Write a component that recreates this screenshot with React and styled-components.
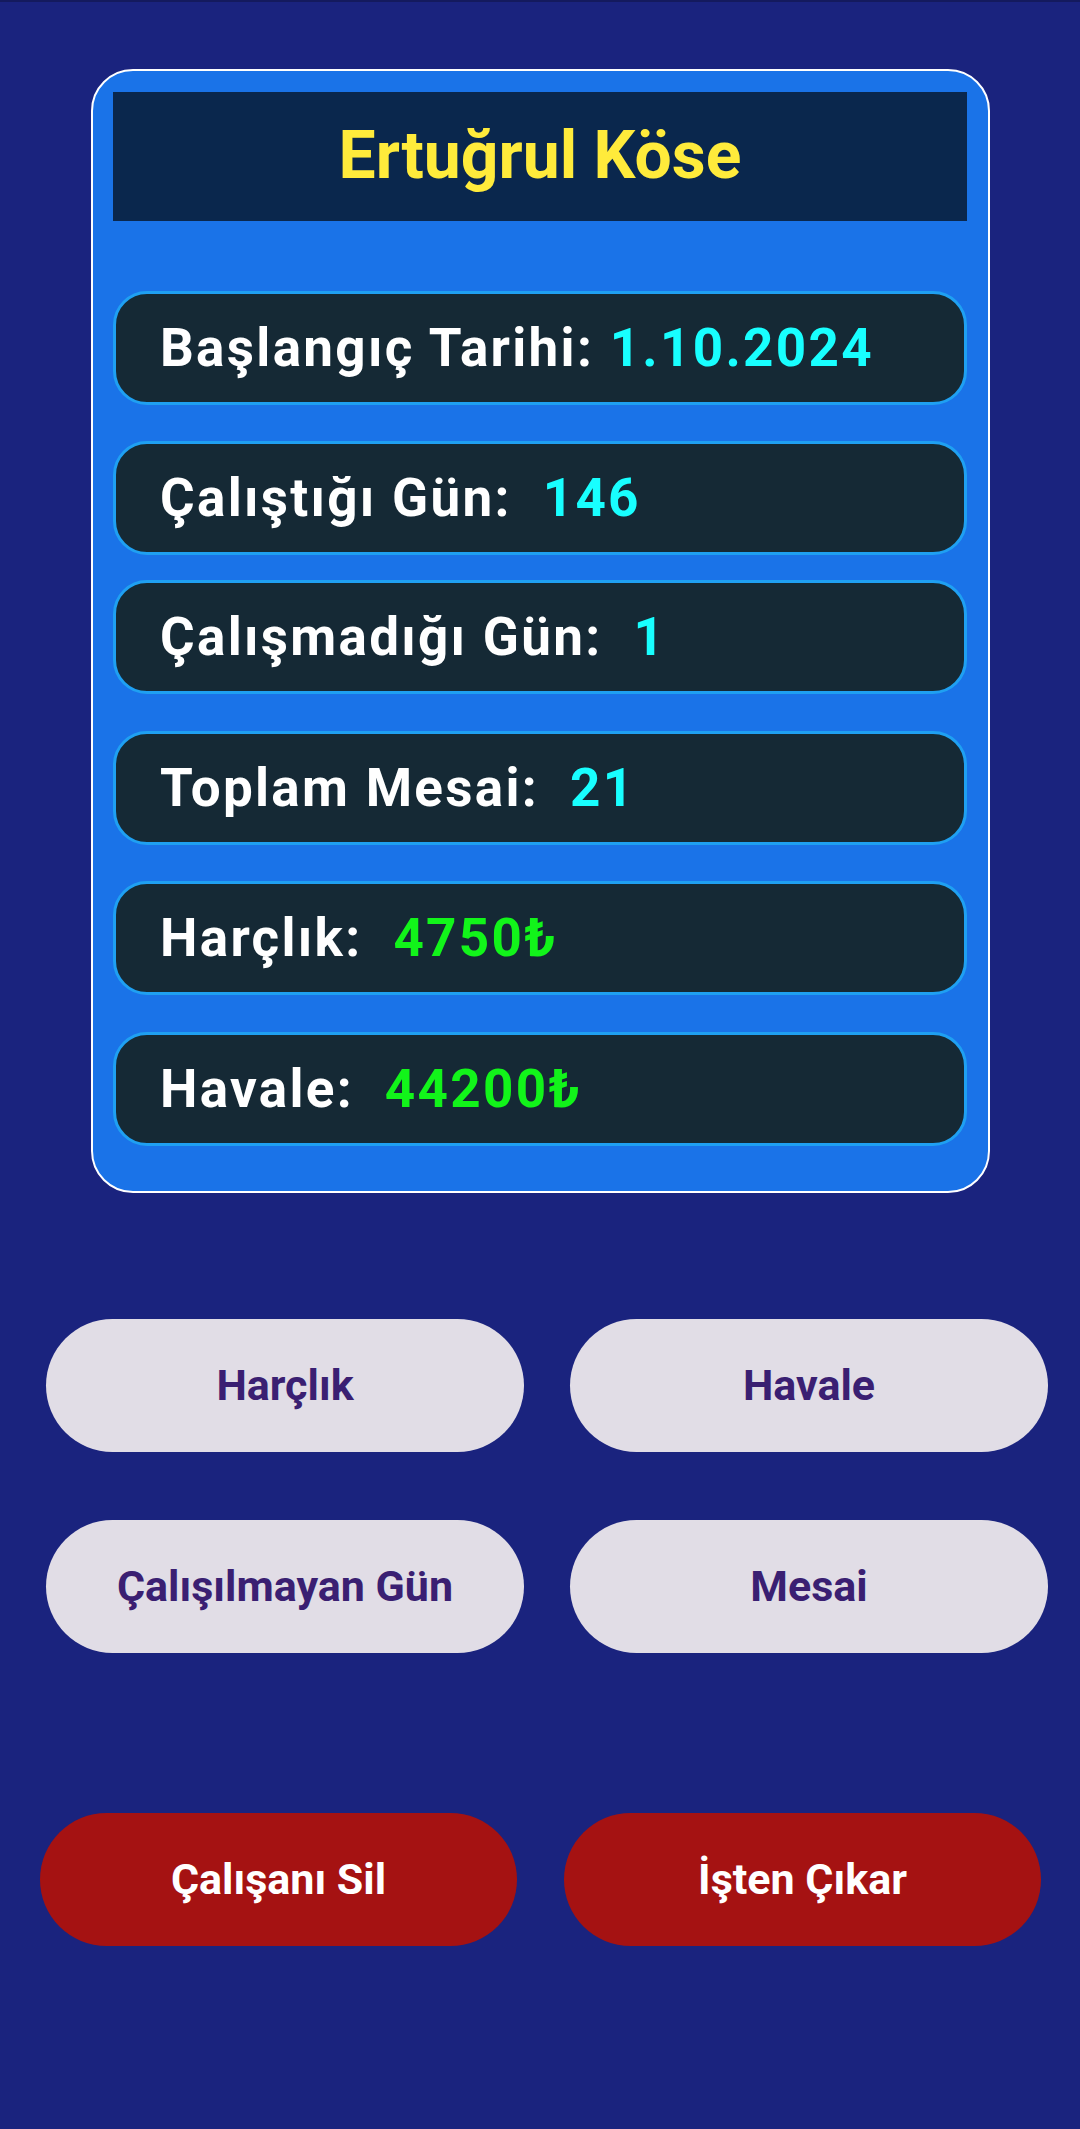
import React from "react";
import styled, { createGlobalStyle } from "styled-components";

const Global = createGlobalStyle`
  html, body { margin: 0; padding: 0; background: #1A237E; }
  body { font-family: Roboto, "Noto Sans", "Liberation Sans", sans-serif; }
  * { box-sizing: border-box; }
`;

const Page = styled.div`
  min-height: 2129px;
  background: #1A237E;
  border-top: 2px solid #141a5e;
  padding-top: 67px;
  display: flex;
  flex-direction: column;
`;

const Card = styled.section`
  width: 899px;
  margin: 0 auto;
  background: #1A73E8;
  border: 2.5px solid #ffffff;
  border-radius: 42px;
  padding: 20.5px 20.5px 45px;
  display: flex;
  flex-direction: column;
`;

const Header = styled.div`
  height: 129px;
  background: #0A274D;
  display: flex;
  align-items: center;
  justify-content: center;
`;

const Title = styled.h1`
  margin: 0;
  font-size: 66px;
  font-weight: 700;
  color: #FFEB3B;
  line-height: 1;
`;

const Rows = styled.div`
  margin-top: 70px;
  display: flex;
  flex-direction: column;
`;

const Row = styled.div`
  margin-top: ${(p) => p.$gap}px;
  height: 114px;
  background: #152935;
  border: 3px solid #1FA0F2;
  border-radius: 34px;
  padding-left: 44px;
  display: flex;
  align-items: center;
  font-size: 53px;
  font-weight: 700;
  letter-spacing: 2.3px;
  white-space: pre;
  color: #ffffff;
`;

const Value = styled.span`
  color: ${(p) => (p.$money ? "#12F41A" : "#18FFFF")};
`;

const ButtonGrid = styled.div`
  margin: 126px 0 0 46px;
  display: grid;
  grid-template-columns: 478px 478px;
  column-gap: 46px;
  row-gap: 68px;
`;

const DangerRow = styled.div`
  margin: 160px 0 0 40px;
  display: grid;
  grid-template-columns: 477px 477px;
  column-gap: 47px;
`;

const PillButton = styled.button`
  height: 133px;
  border: none;
  border-radius: 67px;
  background: ${(p) => (p.$danger ? "#A51212" : "#E1DDE6")};
  color: ${(p) => (p.$danger ? "#ffffff" : "#3A1F72")};
  font-family: Roboto, "Noto Sans", "Liberation Sans", sans-serif;
  font-size: 43px;
  font-weight: 700;
  padding: 0;
  cursor: pointer;
`;

const stats = [
  { label: "Başlangıç Tarihi: ", value: "1.10.2024", gap: 0 },
  { label: "Çalıştığı Gün:  ", value: "146", gap: 36 },
  { label: "Çalışmadığı Gün:  ", value: "1", gap: 25 },
  { label: "Toplam Mesai:  ", value: "21", gap: 37 },
  { label: "Harçlık:  ", value: "4750₺", gap: 36, money: true },
  { label: "Havale:  ", value: "44200₺", gap: 37, money: true },
];

export default function App() {
  return (
    <>
      <Global />
      <Page>
        <Card>
          <Header>
            <Title>Ertuğrul Köse</Title>
          </Header>
          <Rows>
            {stats.map((s) => (
              <Row key={s.label} $gap={s.gap}>
                {s.label}
                <Value $money={s.money}>{s.value}</Value>
              </Row>
            ))}
          </Rows>
        </Card>
        <ButtonGrid>
          <PillButton>Harçlık</PillButton>
          <PillButton>Havale</PillButton>
          <PillButton>Çalışılmayan Gün</PillButton>
          <PillButton>Mesai</PillButton>
        </ButtonGrid>
        <DangerRow>
          <PillButton $danger>Çalışanı Sil</PillButton>
          <PillButton $danger>İşten Çıkar</PillButton>
        </DangerRow>
      </Page>
    </>
  );
}
